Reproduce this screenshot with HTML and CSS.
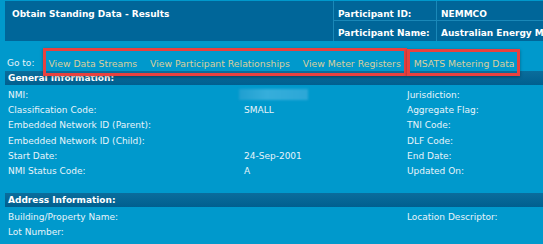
FILE: index.html
```html
<!DOCTYPE html>
<html lang="en">
<head>
  <meta charset="UTF-8" />
  <title>Obtain Standing Data - Results</title>
  <link rel="stylesheet" href="styles.css">
</head>
<body>

  <div class="page">
    <table class="header" cellspacing="1">
      <tr>
        <td class="title" rowspan="2">Obtain Standing Data - Results</td>
        <td class="hlabel">Participant ID:</td>
        <td class="hvalue">NEMMCO</td>
      </tr>
      <tr>
        <td class="hlabel">Participant Name:</td>
        <td class="hvalue">Australian Energy Market Operator</td>
      </tr>
    </table>

    <div class="goto">
      <span class="goto-label">Go to:</span>
      <a href="#">View Data Streams</a>
      <a href="#">View Participant Relationships</a>
      <a href="#">View Meter Registers</a>
      <a href="#" class="msats">MSATS Metering Data</a>
      <div class="mark mark-1"></div>
      <div class="mark mark-2"></div>
    </div>

    <div class="section-bar">General Information:</div>
    <div class="grid general">
      <div>NMI:</div><div><span class="blur"></span></div><div>Jurisdiction:</div><div></div>
      <div>Classification Code:</div><div>SMALL</div><div>Aggregate Flag:</div><div></div>
      <div>Embedded Network ID (Parent):</div><div></div><div>TNI Code:</div><div></div>
      <div>Embedded Network ID (Child):</div><div></div><div>DLF Code:</div><div></div>
      <div>Start Date:</div><div>24-Sep-2001</div><div>End Date:</div><div></div>
      <div>NMI Status Code:</div><div>A</div><div>Updated On:</div><div></div>
    </div>
    <div class="spacer"></div>

    <div class="section-bar">Address Information:</div>
    <div class="grid address">
      <div>Building/Property Name:</div><div></div><div>Location Descriptor:</div><div></div>
      <div>Lot Number:</div><div></div><div></div><div></div>
    </div>
  </div>

</body>
</html>
```

FILE: styles.css
```css
body {
  margin: 0;
  padding: 1px 0 0 5px;
  background-color: #0099cc;
  font-family: "DejaVu Sans", Verdana, sans-serif;
  font-size: 9px;
  color: #e8f4fa;
  overflow: hidden;
}

.page {
  width: 720px;
}

.header {
  width: 100%;
  border-collapse: separate;
  border-spacing: 0;
  background-color: #1a88b8;
  margin: 0;
}

.header td {
  background-color: #006699;
  color: #ffffff;
  font-weight: bold;
  padding: 6px 4px 1px;
  line-height: 13px;
  white-space: nowrap;
}

.header tr:first-child td {
  padding: 7px 4px 0;
  line-height: 12px;
}

.header .title,
.header tr:first-child td.title {
  width: 314px;
  vertical-align: top;
  padding: 7px 7px 0;
  line-height: 12px;
}

.header .hlabel {
  width: 94px;
  border-left: 1px solid #1a88b8;
}

.header .hvalue {
  border-left: 1px solid #1a88b8;
}

.header tr:first-child td.hlabel,
.header tr:first-child td.hvalue {
  border-bottom: 1px solid #1a88b8;
}

.goto {
  position: relative;
  display: flex;
  align-items: center;
  height: 14px;
  padding: 15px 0 1px 2px;
}

.goto-label {
  margin-right: 14px;
}

.goto a {
  color: #dacf9c;
  font-size: 9.3px;
  text-decoration: none;
  margin-right: 13px;
}

.mark {
  position: absolute;
  border: 3px solid #e8413f;
  box-shadow: 0 1px 3px rgba(0, 0, 0, 0.35);
}

.mark-1 {
  left: 38px;
  top: 6.5px;
  width: 358px;
  height: 22.5px;
}

.mark-2 {
  left: 402px;
  top: 8px;
  width: 107px;
  height: 21px;
}

.section-bar {
  background: linear-gradient(#0a6d9c, #005f8f);
  color: #ffffff;
  font-weight: bold;
  height: 14px;
  line-height: 14px;
  padding-left: 3px;
}

.grid {
  display: grid;
  grid-template-columns: 236px 163px 160px 1fr;
  grid-auto-rows: 15.3px;
  align-items: center;
  padding: 0 0 0 3px;
}

.general {
  padding-top: 2px;
}

.address {
  grid-auto-rows: 15px;
  padding-top: 2.5px;
}

.blur {
  display: block;
  width: 69px;
  height: 11px;
  margin-left: -5px;
  background: linear-gradient(90deg, #1f9fd0, #36aedb 40%, #2ca7d7);
  filter: blur(1px);
}

.spacer {
  height: 14.5px;
}
```
